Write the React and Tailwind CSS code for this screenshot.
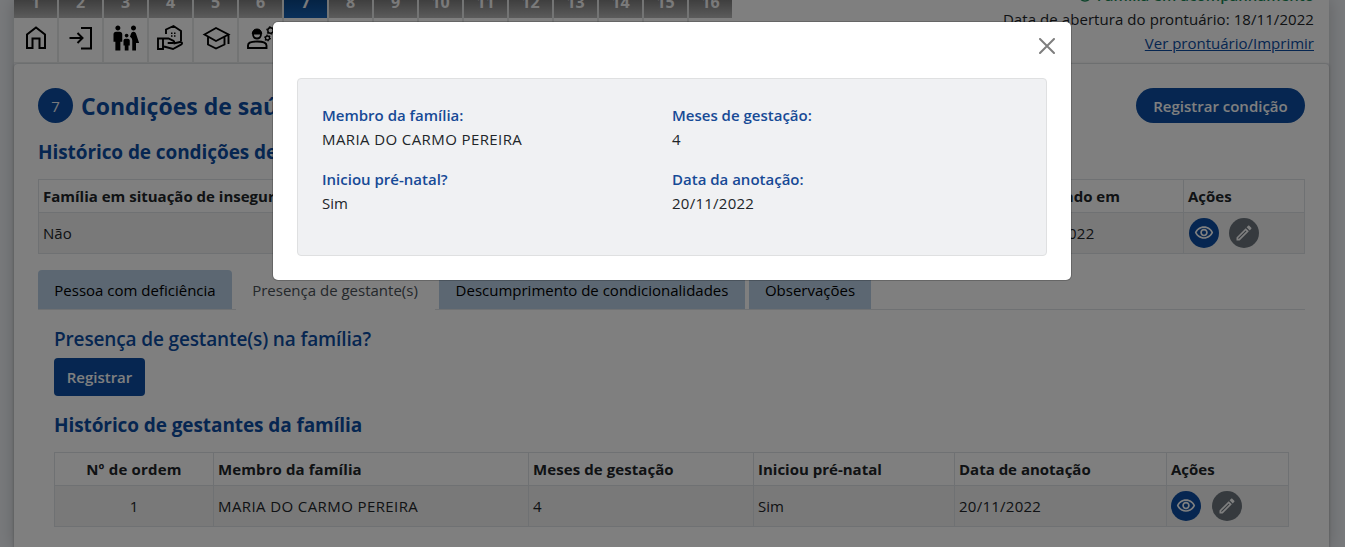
import { MdFamilyRestroom, MdOutlineVisibility, MdOutlineEdit, MdCheckCircleOutline } from "react-icons/md";

function StepIcon({ children }) {
  return (
    <svg className="h-[44px] w-[43px]" viewBox="0 0 43 44" fill="none" stroke="black" strokeWidth="2">
      {children}
    </svg>
  );
}

const steps = [
  <StepIcon>
    <path d="M13 30V16.500l9-7 9 7V30h-5.500v-9.500h-7V30z" />
  </StepIcon>,
  <StepIcon>
    <path d="M10.500 20h13M18.500 15l5 5-5 5M22 10h10v20.500H22" />
  </StepIcon>,
  <MdFamilyRestroom className="mb-1 h-[30px] w-[30px]" />,
  <StepIcon>
    <path d="M17 16v-4.500L24.500 8l7.500 5v10M9 20.500h5v10.500H9zM14.500 20.500h5l5 2.300c1.300.8.8 2.200-.8 2.200h-5M24.500 25.500l6.500-1.500c2.500-.2 2.700 1.800 1 2.700L24 31l-9-2.500" strokeWidth="1.900" />
    <path d="M22 15.300h1.500M25 15.300h1.500M22 18h1.500M25 18h1.500" strokeWidth="1.500" />
  </StepIcon>,
  <StepIcon>
    <path d="M10.500 16.500L22 10l12.500 6.500L22 23zM14 19v7.500l8 4 8.500-4V19M34.500 16.500V26" strokeWidth="1.900" />
  </StepIcon>,
  <StepIcon>
    <path d="M9 30v-2.500c0-5.300 18.500-5.300 18.500 0V30z" strokeWidth="1.900" />
    <path d="M14 15.500h8c.2 4-2 5-4 5s-4.200-1-4-5z" strokeWidth="1.800" />
    <path d="M13.200 15.500c.4-2.700 2-4.500 4.800-4.500s4.400 1.800 4.800 4.500z" fill="black" strokeWidth="1" />
    <circle cx="31.500" cy="12.500" r="2.700" strokeWidth="1.400" />
    <circle cx="31.500" cy="12.500" r="3.700" strokeWidth="1.300" strokeDasharray="1.600 2.270" />
    <circle cx="28.500" cy="20" r="2" strokeWidth="1.300" />
    <circle cx="28.500" cy="20" r="2.800" strokeWidth="1.200" strokeDasharray="1.300 1.630" />
  </StepIcon>,
  null, null, null, null, null, null, null, null, null, null,
];

function StepTabs() {
  return (
    <div className="-mt-[26px] flex h-[89px] gap-[2px] bg-[#e7e8e9]">
      {steps.map((icon, i) => (
        <div key={i} className="w-[43px] shrink-0">
          <div
            className={
              "flex h-11 items-center justify-center pt-[12px] text-[16px] leading-none font-bold text-[#f5f5f5] " +
              (i === 6 ? "bg-linear-to-b from-[#00254f] to-[#1560b4]" : "bg-linear-to-b from-[#333333] to-[#b8b8b8]")
            }
          >
            {i + 1}
          </div>
          <div className="flex h-[44px] items-center justify-center bg-white text-black">{icon}</div>
        </div>
      ))}
    </div>
  );
}

function Actions({ className }) {
  return (
    <div className={"flex " + className}>
      <span className="flex h-[30px] w-[30px] items-center justify-center rounded-full bg-[#0c4da2] text-white">
        <MdOutlineVisibility className="h-5 w-5" />
      </span>
      <span className="flex h-[30px] w-[30px] items-center justify-center rounded-full bg-[#6c757d] text-white">
        <MdOutlineEdit className="h-5 w-5" />
      </span>
    </div>
  );
}

const cell = "border border-[#dee2e6] px-1 whitespace-nowrap";

function Field({ label, value, valueClass }) {
  return (
    <div className="h-16 w-[350px] leading-6">
      <div className="font-semibold text-[#174a96]">{label}</div>
      <div className={valueClass}>{value}</div>
    </div>
  );
}

export default function App() {
  return (
    <div className="h-[547px] w-[1345px] overflow-hidden bg-[#f0f3f7] font-['Open_Sans',sans-serif] text-[15px] text-[#212529]">
      <div className="mx-[14px] h-[547px] w-[1315px] shadow-[0_0_16px_rgba(0,0,0,0.2)]">
        <header className="flex h-[63px] items-start justify-between bg-white">
          <StepTabs />
          <div className="-mt-[17px] flex flex-col items-end pr-[15px] leading-6 whitespace-nowrap">
            <div className="flex items-center gap-1 font-semibold text-[#198754]">
              <MdCheckCircleOutline className="h-4 w-4" />
              <span className="tracking-[0.05px]">Família em acompanhamento</span>
            </div>
            <div className="tracking-[0.07px]">Data de abertura do prontuário: 18/11/2022</div>
            <div className="text-[#0c4da2] underline">Ver prontuário/Imprimir</div>
          </div>
        </header>
        <main className="mt-px h-[520px] rounded-t bg-white px-6 pt-6 shadow-[0_0_3px_rgba(0,0,0,0.25)]">
          <div className="flex h-[35px] items-center justify-between">
            <div className="flex items-center gap-2">
              <span className="flex h-[35px] w-[35px] items-center justify-center rounded-full bg-[#0c4da2] pt-px text-[#f0f3f7]">7</span>
              <h1 className="pt-[2px] text-[23px] font-bold text-[#0c4da2]">Condições de saúde</h1>
            </div>
            <button className="h-[35px] w-[169px] rounded-full bg-[#0c4da2] pt-px text-[15px] font-semibold text-white">Registrar condição</button>
          </div>
          <h2 className="mt-[14px] text-[19px] leading-[30px] font-bold tracking-[-0.08px] text-[#0c4da2]">Histórico de condições de saúde</h2>
          <table className="mt-[12px] w-[1266px] table-fixed border-collapse">
            <colgroup>
              <col className="w-[600px]" />
              <col className="w-[369px]" />
              <col className="w-[176px]" />
              <col className="w-[121px]" />
            </colgroup>
            <tbody>
              <tr className="h-[33px] text-left font-bold">
                <td className={cell}>Família em situação de insegurança</td>
                <td className={cell} />
                <td className={cell}>Registrado em</td>
                <td className={cell}>Ações</td>
              </tr>
              <tr className="h-[41px] bg-[#f2f2f2]">
                <td className={cell}>Não</td>
                <td className={cell} />
                <td className={cell + " tracking-[0.3px]"}>20/11/2022</td>
                <td className={cell}><Actions className="ml-px gap-[10px]" /></td>
              </tr>
            </tbody>
          </table>
          <nav className="mt-4 flex h-10 w-[1267px] gap-1 border-b border-[#dee2e6] text-center leading-10 whitespace-nowrap">
            <div className="w-[194px] rounded-t bg-[#b8cfe5] text-black">Pessoa com deficiência</div>
            <div className="h-10 w-[199px] bg-white pr-px text-[#495057]">Presença de gestante(s)</div>
            <div className="w-[306px] rounded-t bg-[#b8cfe5] text-black">Descumprimento de condicionalidades</div>
            <div className="w-[122px] rounded-t bg-[#b8cfe5] text-black">Observações</div>
          </nav>
          <section className="px-4 pt-[17px]">
            <h3 className="text-[19px] leading-6 font-semibold tracking-[-0.14px] text-[#0c4da2]">Presença de gestante(s) na família?</h3>
            <button className="mt-[7px] block h-[38px] w-[91px] rounded bg-[#0c4da2] font-semibold text-white">Registrar</button>
            <h3 className="mt-[17px] text-[19px] leading-6 font-bold tracking-[-0.09px] text-[#0c4da2]">Histórico de gestantes da família</h3>
            <table className="mt-[15px] w-[1234px] table-fixed border-collapse">
              <colgroup>
                <col className="w-[159px]" />
                <col className="w-[315px]" />
                <col className="w-[225px]" />
                <col className="w-[201px]" />
                <col className="w-[212px]" />
                <col className="w-[122px]" />
              </colgroup>
              <tbody>
                <tr className="h-[33px] font-bold">
                  <td className={cell + " text-center tracking-[0.2px]"}>Nº de ordem</td>
                  <td className={cell + " tracking-[0.1px]"}>Membro da família</td>
                  <td className={cell + " tracking-[0.08px]"}>Meses de gestação</td>
                  <td className={cell}>Iniciou pré-natal</td>
                  <td className={cell}>Data de anotação</td>
                  <td className={cell}>Ações</td>
                </tr>
                <tr className="h-[41px] bg-[#f2f2f2]">
                  <td className={cell + " text-center"}>1</td>
                  <td className={cell + " tracking-[0.4px]"}>MARIA DO CARMO PEREIRA</td>
                  <td className={cell}>4</td>
                  <td className={cell}>Sim</td>
                  <td className={cell + " tracking-[0.25px]"}>20/11/2022</td>
                  <td className={cell}><Actions className="gap-[11px]" /></td>
                </tr>
              </tbody>
            </table>
          </section>
        </main>
      </div>
      <div className="fixed inset-0 flex items-start bg-black/50">
        <div role="dialog" className="mt-[22px] ml-[273px] h-[258px] w-[798px] rounded-[5px] bg-white px-6 shadow-[0_0_0_1px_rgba(0,0,0,0.2)]">
          <div className="flex h-14 items-start justify-end pt-4">
            <svg className="-mr-2 h-4 w-4 opacity-50" viewBox="0 0 16 16" stroke="black" strokeWidth="2" strokeLinecap="round">
              <path d="M1 1l14 14M15 1L1 15" />
            </svg>
          </div>
          <div className="flex h-[178px] w-[750px] flex-wrap content-start rounded border border-[#dfe0e1] bg-[#f0f1f3] pt-6 pl-6">
            <Field label="Membro da família:" value="MARIA DO CARMO PEREIRA" valueClass="tracking-[0.4px]" />
            <Field label="Meses de gestação:" value="4" valueClass="" />
            <Field label="Iniciou pré-natal?" value="Sim" valueClass="" />
            <Field label="Data da anotação:" value="20/11/2022" valueClass="tracking-[0.25px]" />
          </div>
        </div>
      </div>
    </div>
  );
}
